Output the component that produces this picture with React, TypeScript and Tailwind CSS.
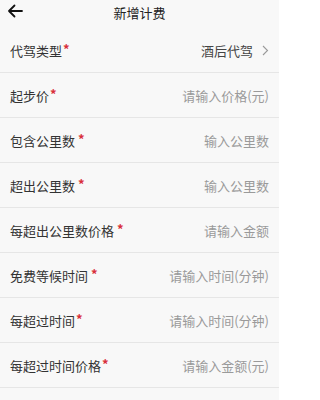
import React from "react";

const rows = [
  { id: 1, label: "代驾类型", value: "酒后代驾", gap: false, select: true },
  { id: 2, label: "起步价", value: "请输入价格(元)", gap: false },
  { id: 3, label: "包含公里数", value: "输入公里数", gap: true },
  { id: 4, label: "超出公里数", value: "输入公里数", gap: true },
  { id: 5, label: "每超出公里数价格", value: "请输入金额", gap: true },
  { id: 6, label: "免费等候时间", value: "请输入时间(分钟)", gap: true },
  { id: 7, label: "每超过时间", value: "请输入时间(分钟)", gap: false },
  { id: 8, label: "每超过时间价格", value: "请输入金额(元)", gap: false },
];

const App = () => {
  return (
    <div
      className="w-[279px] h-[400px] overflow-hidden bg-[#f8f8f8]"
      style={{ fontFamily: '"Noto Sans CJK SC", "Noto Sans", sans-serif' }}
    >
      {/* Header */}
      <div className="relative h-[28px] flex items-center justify-center">
        <button className="absolute left-[7px] top-[4px] text-[#111]">
          <svg width="16" height="14" viewBox="0 0 16 14" fill="none">
            <path
              d="M15 7H2M7.5 1.5L2 7l5.5 5.5"
              stroke="currentColor"
              strokeWidth="1.8"
              strokeLinecap="round"
              strokeLinejoin="round"
            />
          </svg>
        </button>
        <h1 className="text-[13px] text-[#222] leading-none -mt-[4px]">新增计费</h1>
      </div>

      {/* Form rows */}
      <div>
        {rows.map(item => (
          <div
            key={item.id}
            className="h-[45px] flex items-center justify-between px-[10px] border-b border-[#e6e6e6]"
          >
            <div className="flex items-start text-[13px] text-[#333] leading-none">
              <span>{item.label}</span>
              <span
                className={`text-[#d9303a] text-[13px] font-bold leading-none -mt-[2px] ${
                  item.gap ? "ml-[3px]" : "ml-[1px]"
                }`}
              >
                *
              </span>
            </div>
            {item.select ? (
              <div className="flex items-center gap-[9px] text-[13px] text-[#444] leading-none">
                <span>{item.value}</span>
                <svg width="7" height="11" viewBox="0 0 7 11" fill="none">
                  <path d="M1 1l4.5 4.5L1 10" stroke="#9a9a9a" strokeWidth="1.1" />
                </svg>
              </div>
            ) : (
              <span className="text-[13px] text-[#9a9a9a] leading-none">{item.value}</span>
            )}
          </div>
        ))}
      </div>
    </div>
  );
};

export default App;
